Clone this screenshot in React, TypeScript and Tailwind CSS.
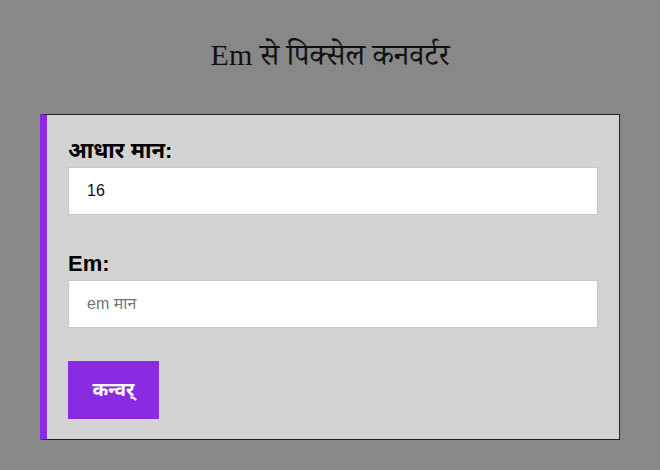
import { useState } from "react";

export default function App() {
  const [base, setBase] = useState("16");
  const [em, setEm] = useState("");

  return (
    <main className="min-h-[470px] bg-[#888888] px-[40px] pt-[36px] font-['Liberation_Sans','Noto_Sans',sans-serif]">
      <h1 className="text-center font-['Liberation_Serif','Noto_Serif_Devanagari','Noto_Serif',serif] text-[30px] leading-[38px] text-[#111]">
        Em से पिक्सेल कनवर्टर
      </h1>

      <section className="mt-[40px] flex flex-col border border-l-[7px] border-[#222] border-l-[#8a2be2] bg-[#d3d3d3] px-[21px] pb-[20px] pt-[24px]">
        <label className="mb-[4px] block h-[24px] text-[22px] font-bold leading-[24px] text-black">आधार मान:</label>
        <input
          className="h-[48px] w-full border border-[#c8c8c8] bg-white px-[18px] text-[16px] text-[#111] outline-none"
          value={base}
          onChange={(e) => setBase(e.target.value)}
        />

        <label className="mb-[4px] mt-[37px] block h-[24px] text-[22px] font-bold leading-[24px] text-black">Em:</label>
        <input
          className="h-[48px] w-full border border-[#c8c8c8] bg-white px-[18px] text-[16px] text-[#111] outline-none placeholder:text-[#757575]"
          placeholder="em मान"
          value={em}
          onChange={(e) => setEm(e.target.value)}
        />

        <button className="mt-[33px] h-[58px] w-[91px] bg-[#8a2be2] text-[19px] font-bold text-white">कन्वर्</button>
      </section>
    </main>
  );
}
